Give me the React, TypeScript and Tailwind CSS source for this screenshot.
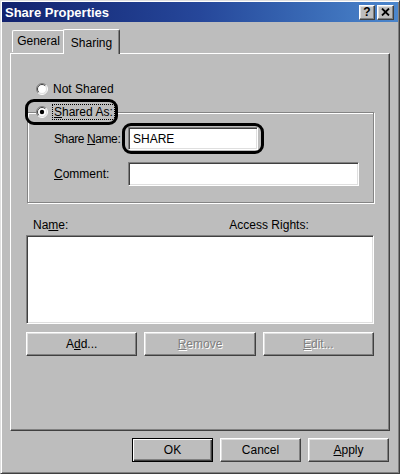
import React from "react";

const raised =
  "border border-t-white border-l-white border-r-[#404040] border-b-[#404040] shadow-[inset_-1px_-1px_0_#808080,inset_1px_1px_0_#dfdfdf]";
const sunken =
  "border border-t-[#808080] border-l-[#808080] border-r-white border-b-white shadow-[inset_1px_1px_0_#404040,inset_-1px_-1px_0_#dfdfdf] bg-white";

function Radio({ checked }: { checked?: boolean }) {
  return (
    <svg width="12" height="12" viewBox="0 0 12 12" className="shrink-0">
      <circle cx="6" cy="6" r="5" fill="#fff" />
      <path d="M2.1 9.9 A5.5 5.5 0 0 1 9.9 2.1" stroke="#808080" fill="none" />
      <path d="M9.9 2.1 A5.5 5.5 0 0 1 2.1 9.9" stroke="#fff" fill="none" />
      <path d="M2.8 9.2 A4.5 4.5 0 0 1 9.2 2.8" stroke="#404040" fill="none" />
      <path d="M9.2 2.8 A4.5 4.5 0 0 1 2.8 9.2" stroke="#dfdfdf" fill="none" />
      {checked && <circle cx="6" cy="6" r="2.2" fill="#000" />}
    </svg>
  );
}

function Btn({
  children,
  disabled,
  isDefault,
  className = "",
}: {
  children: React.ReactNode;
  disabled?: boolean;
  isDefault?: boolean;
  className?: string;
}) {
  const frame = isDefault
    ? "border border-black shadow-[inset_1px_1px_0_#fff,inset_-1px_-1px_0_#404040,inset_-2px_-2px_0_#808080]"
    : raised;
  return (
    <div
      className={`h-[24px] flex items-center justify-center text-[12px] ${frame} ${
        disabled ? "text-[#808080] [text-shadow:1px_1px_0_#fff]" : "text-black"
      } ${className}`}
    >
      {children}
    </div>
  );
}

export default function App() {
  return (
    <div className="w-[400px] h-[474px] bg-[#bdbdbd] p-px border border-t-[#dfdfdf] border-l-[#dfdfdf] border-r-[#404040] border-b-[#404040] shadow-[inset_1px_1px_0_#fff,inset_-1px_-1px_0_#808080] font-['Liberation_Sans',Arial,sans-serif] text-black flex flex-col overflow-hidden">
      {/* title bar */}
      <div className="h-[20px] bg-linear-to-r from-[#12226e] via-[#26479a] to-[#4b86cc] flex items-center pl-[3px] pr-[4px]">
        <span className="text-white font-bold text-[13px] leading-none">Share Properties</span>
        <div className="ml-auto flex gap-[2px]">
          <div className={`w-[16px] h-[15px] bg-[#bdbdbd] flex items-center justify-center text-[12px] font-bold leading-none ${raised}`}>
            ?
          </div>
          <div className={`w-[17px] h-[15px] bg-[#bdbdbd] flex items-center justify-center ${raised}`}>
            <svg width="9" height="8" viewBox="0 0 9 8">
              <path d="M1 0.5 L8 7.5 M8 0.5 L1 7.5" stroke="#000" strokeWidth="1.8" />
            </svg>
          </div>
        </div>
      </div>

      <div className="px-[8px] flex flex-col flex-1">
        {/* tabs */}
        <div className="mt-[7px] flex items-end pl-[2px] relative z-10">
          <div className="w-[52px] h-[22px] mb-px border-t border-l border-t-white border-l-white rounded-tl-[2px] flex items-center justify-center text-[12px] pb-[1px]">
            General
          </div>
          <div className="w-[57px] h-[25px] -mb-px -ml-px bg-[#bdbdbd] border-t border-l border-r border-t-white border-l-white border-r-[#404040] rounded-t-[2px] shadow-[inset_-1px_0_0_#808080] flex items-start justify-center pt-[4px] text-[12px]">
            Sharing
          </div>
        </div>

        {/* panel */}
        <div className="h-[378px] border border-t-white border-l-white border-r-[#404040] border-b-[#404040] shadow-[inset_-1px_-1px_0_#808080] px-[15px] pt-[27px] flex flex-col">
          <div className="h-[16px] flex items-center pl-[10px] gap-[5px] text-[12px]">
            <Radio />
            <span>Not Shared</span>
          </div>

          {/* group box */}
          <div className="mt-[15px] ml-px border border-[#848484] shadow-[inset_1px_1px_0_#fff,1px_1px_0_#fff] h-[91px] flex flex-col">
            <div className="-mt-[9px] ml-[8px] w-fit h-[16px] bg-[#bdbdbd] flex items-center gap-[5px] pr-[4px] text-[12px] relative">
              <span className="absolute -left-[11px] -top-[5px] w-[93px] h-[26px] border-[3px] border-black rounded-[9px]" />
              <Radio checked />
              <span className="outline-1 outline-dotted outline-black leading-[14px] px-px">
                <span className="underline">S</span>hared As:
              </span>
            </div>

            <div className="mt-[7px] pl-[26px] flex items-center text-[12px]">
              <span className="w-[74px] tracking-[-0.4px]">
                Share <span className="underline">N</span>ame:
              </span>
              <div className="relative">
                <span className="absolute -left-[6px] -top-[4px] w-[142px] h-[31px] border-[3px] border-black rounded-[9px]" />
                <div className={`w-[130px] h-[23px] ${sunken} flex items-center pl-[4px] text-[12px]`}>SHARE</div>
              </div>
            </div>

            <div className="mt-[12px] pl-[26px] flex items-center text-[12px]">
              <span className="w-[74px]">
                <span className="underline">C</span>omment:
              </span>
              <div className={`w-[231px] h-[24px] ${sunken}`} />
            </div>
          </div>

          {/* list */}
          <div className="mt-[14px] h-[16px] flex items-center text-[12px]">
            <span className="ml-[7px]">
              Na<span className="underline">m</span>e:
            </span>
            <span className="ml-[161px]">Access Rights:</span>
          </div>
          <div className={`mt-[2px] h-[89px] ${sunken}`} />

          <div className="mt-[8px] flex gap-[7px]">
            <Btn className="flex-1">
              A<span className="underline">d</span>d...
            </Btn>
            <Btn className="flex-1" disabled>
              <span className="underline">R</span>emove
            </Btn>
            <Btn className="flex-1" disabled>
              <span className="underline">E</span>dit...
            </Btn>
          </div>
        </div>

        {/* dialog buttons */}
        <div className="mt-[7px] flex justify-end gap-[7px] pr-px">
          <Btn isDefault className="w-[81px]">OK</Btn>
          <Btn className="w-[81px]">Cancel</Btn>
          <Btn className="w-[81px]">
            <span className="underline">A</span>pply
          </Btn>
        </div>
      </div>
    </div>
  );
}
